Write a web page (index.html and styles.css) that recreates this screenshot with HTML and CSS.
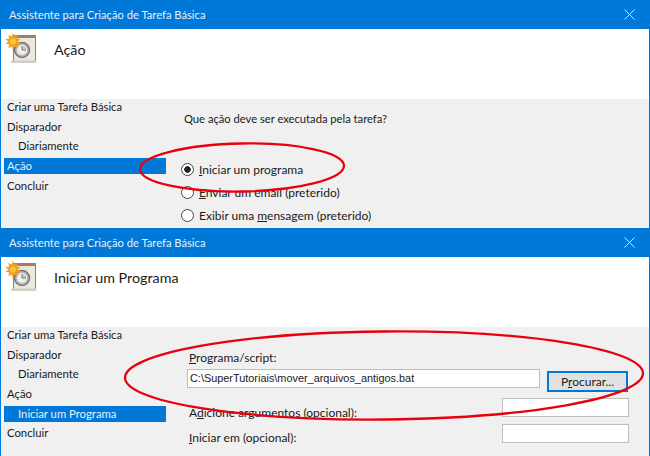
FILE: index.html
```html
<!DOCTYPE html>
<html lang="pt-BR">
<head>
    <meta charset="UTF-8">
    <title>Assistente para Criação de Tarefa Básica</title>
    <link rel="stylesheet" href="styles.css">
</head>
<body>
    <svg width="0" height="0" class="defs">
        <symbol id="task-icon" viewBox="0 0 32 32">
            <path d="M8.500 2.500h22v27h-22z" fill="#ece8e0" stroke="#8d8378"/>
            <path d="M8 2h23v3H8z" fill="#a07f66"/>
            <path d="M6 27.500h25V30H6z" fill="#d2cec6"/>
            <circle cx="17" cy="17" r="7.500" fill="#b4b8c0" stroke="#7d7770" stroke-width="1.500"/>
            <circle cx="17" cy="17" r="5" fill="#efeeea"/>
            <path d="M17 17v-4a4 4 0 0 1 4 4z" fill="#d9c6a8"/>
            <path d="M17 13v4h4" fill="none" stroke="#80756a"/>
            <path d="M8 0l1.400 3.600 3.200-1.800-.8 3.600 3.600.8-2.800 2.300 2.800 2.300-3.600.8.800 3.600-3.200-1.800L8 17l-1.400-3.600-3.200 1.800.8-3.600-3.600-.8 2.800-2.300L.6 6.200l3.600-.8-.8-3.600 3.200 1.800z" fill="#f59e16"/>
            <circle cx="8" cy="8.500" r="3" fill="#fcc63c"/>
        </symbol>
    </svg>

    <!-- Passo: Acao -->
    <div class="window">
        <div class="titlebar">
            <span>Assistente para Criação de Tarefa Básica</span>
            <svg class="close" width="11" height="11" viewBox="0 0 11 11"><path d="M.5.500l10 10M10.500.500l-10 10" stroke="#cfe3f7" fill="none"/></svg>
        </div>
        <div class="header">
            <svg class="icon" width="32" height="32"><use href="#task-icon"/></svg>
            <h1>Ação</h1>
        </div>
        <div class="body">
            <ul class="steps">
                <li>Criar uma Tarefa Básica</li>
                <li>Disparador</li>
                <li class="sub">Diariamente</li>
                <li class="current">Ação</li>
                <li>Concluir</li>
            </ul>
            <div class="panel">
                <p class="question">Que ação deve ser executada pela tarefa?</p>
                <label class="radio checked"><i></i><span><u>I</u>niciar um programa</span></label>
                <label class="radio"><i></i><span><u>E</u>nviar um email (preterido)</span></label>
                <label class="radio"><i></i><span>Exibir uma <u>m</u>ensagem (preterido)</span></label>
            </div>
        </div>
    </div>

    <!-- Passo: Iniciar um Programa -->
    <div class="window">
        <div class="titlebar">
            <span>Assistente para Criação de Tarefa Básica</span>
            <svg class="close" width="11" height="11" viewBox="0 0 11 11"><path d="M.5.500l10 10M10.500.500l-10 10" stroke="#cfe3f7" fill="none"/></svg>
        </div>
        <div class="header">
            <svg class="icon" width="32" height="32"><use href="#task-icon"/></svg>
            <h1>Iniciar um Programa</h1>
        </div>
        <div class="body">
            <ul class="steps">
                <li>Criar uma Tarefa Básica</li>
                <li>Disparador</li>
                <li class="sub">Diariamente</li>
                <li>Ação</li>
                <li class="sub current">Iniciar um Programa</li>
                <li>Concluir</li>
            </ul>
            <div class="panel form">
                <label class="field-label"><u>P</u>rograma/script:</label>
                <div class="script-row">
                    <div class="textbox script">C:\SuperTutoriais\mover_arquivos_antigos.bat</div>
                    <button class="browse">P<u>r</u>ocurar...</button>
                </div>
                <div class="option-row args">
                    <label>A<u>d</u>icione argumentos (opcional):</label>
                    <div class="textbox small"></div>
                </div>
                <div class="option-row">
                    <label><u>I</u>niciar em (opcional):</label>
                    <div class="textbox small"></div>
                </div>
            </div>
        </div>
    </div>

    <!-- Marcacoes em vermelho por cima da captura -->
    <svg class="marks" width="650" height="456" viewBox="0 0 650 456">
        <ellipse cx="242" cy="167.500" rx="102" ry="24" transform="rotate(-1 242 167.500)"/>
        <ellipse cx="384" cy="375.500" rx="259" ry="44" transform="rotate(-.5 384 375.500)"/>
    </svg>
</body>
</html>
```

FILE: styles.css
```css
* {
    box-sizing: border-box;
    margin: 0;
    padding: 0;
}

body {
    position: relative;
    width: 650px;
    height: 456px;
    overflow: hidden;
    font-family: 'Lato', 'Noto Sans', sans-serif;
    font-size: 12px;
    color: #1a1a1a;
    background-color: #f0f0f0;
}

.defs {
    position: absolute;
}

.window {
    display: flex;
    flex-direction: column;
    height: 228px;
    border-left: 1px solid #0078d7;
    border-right: 1px solid #0078d7;
}

.titlebar {
    display: flex;
    align-items: center;
    justify-content: space-between;
    flex: 0 0 29px;
    margin: 0 -1px;
    padding: 0 15px 0 9px;
    font-size: 11.200px;
    color: #e4f0fb;
    background-color: #0078d7;
}

.header {
    display: flex;
    align-items: flex-start;
    flex: 0 0 70px;
    background-color: white;
}

.icon {
    margin: 4px 0 0 4px;
}

.header h1 {
    margin: 12px 0 0 17px;
    font-size: 14.300px;
    font-weight: 400;
}

.body {
    display: flex;
    flex: 1;
}

.steps {
    width: 162px;
    margin-left: 3px;
    font-size: 11.300px;
    list-style: none;
}

.steps li {
    height: 16px;
    margin-bottom: 3.700px;
    padding-left: 3px;
    line-height: 16px;
}

.steps .sub {
    padding-left: 14px;
}

.steps .current {
    color: #e4f0fb;
    background-color: #0078d7;
}

.panel {
    flex: 1;
    padding: 13px 0 0 18px;
}

.question {
    margin-bottom: 33px;
    font-size: 11.200px;
}

.radio {
    display: flex;
    align-items: center;
    gap: 5px;
    height: 23px;
    margin-left: -3px;
}

.radio i {
    width: 13px;
    height: 13px;
    border: 1px solid #444;
    border-radius: 50%;
    background-color: white;
}

.radio.checked i {
    background: radial-gradient(circle, #222 0 3px, white 3.500px);
}

.form {
    padding: 23px 20px 0 21px;
}

.field-label {
    display: block;
    margin-bottom: 4px;
    padding-left: 2px;
}

.script-row {
    display: flex;
    align-items: flex-start;
    gap: 7px;
    height: 23px;
    margin-bottom: 6px;
}

.textbox {
    height: 19px;
    padding-left: 2px;
    line-height: 17px;
    border: 1px solid #bdbdbd;
    background-color: white;
}

.script {
    width: 353px;
    font-family: 'Liberation Sans', sans-serif;
    font-size: 10.900px;
}

.browse {
    width: 81px;
    height: 21px;
    margin-top: 2px;
    font: inherit;
    color: inherit;
    border: 2px solid #0078d7;
    background-color: #e1e1e1;
}

.option-row {
    display: flex;
    align-items: flex-start;
    justify-content: space-between;
    height: 19px;
    margin-bottom: 7px;
    padding-left: 2px;
}

.option-row label {
    margin-top: 6px;
}

.args label {
    margin-top: 7px;
}

.small {
    width: 127px;
}

.marks {
    position: absolute;
    top: 0;
    left: 0;
    fill: none;
    stroke: #e8000d;
    stroke-width: 2.300px;
}
```
